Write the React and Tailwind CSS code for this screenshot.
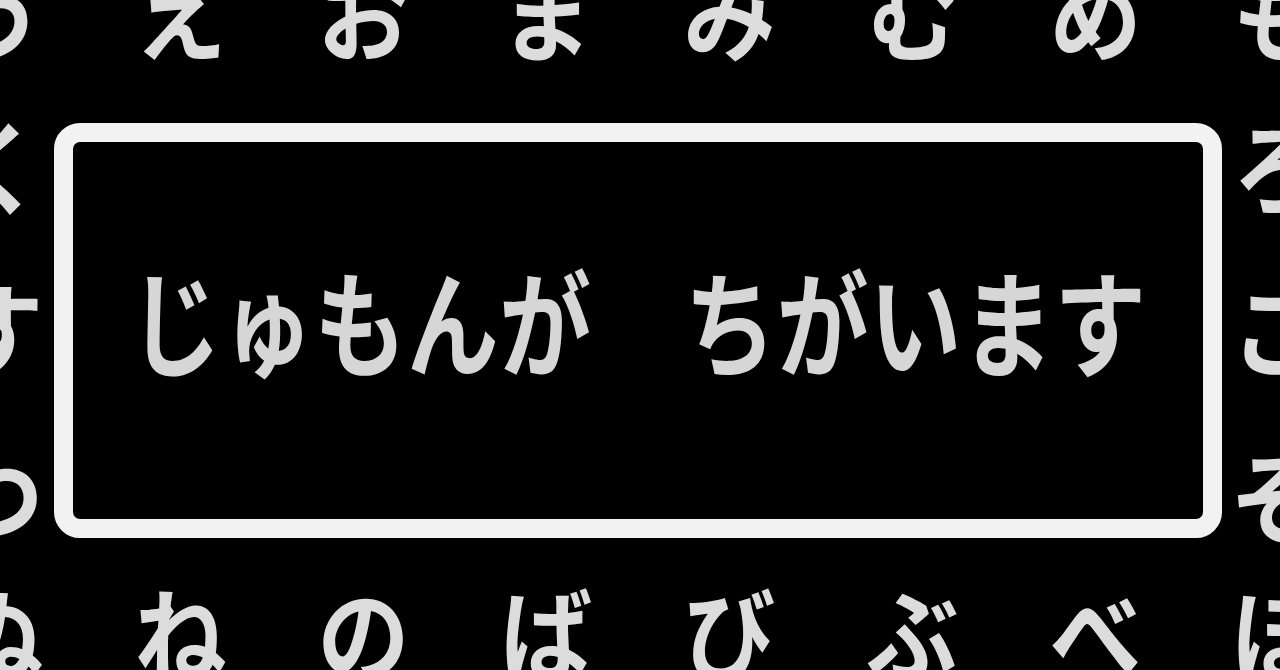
import React from 'react';

// Kana table behind the message window, one string per row
const TABLE = [
  { h: 'h-[160px]', kana: 'うえおまみむめも' },
  { h: 'h-[145px]', kana: 'くけこらりるれろ' },
  { h: 'h-[180px]', kana: 'すせそがぎぐげご' },
  { h: 'h-[155px]', kana: 'つてとざじずぜぞ' },
  { h: 'h-[120px]', kana: 'ぬねのばびぶべぼ' },
];

function KanaRow({ h, kana }) {
  return (
    <div className={`flex items-center ${h}`}>
      {[...kana].map((ch, i) => (
        <div key={i} className="flex w-[183px] shrink-0 justify-center">
          <span className="scale-y-110 text-[92px] font-bold leading-none text-[#dcdcdc]">{ch}</span>
        </div>
      ))}
    </div>
  );
}

export default function App() {
  return (
    <div className="relative h-[670px] w-[1280px] overflow-hidden bg-black font-['Noto_Sans_CJK_JP',sans-serif]">
      <div className="-ml-[94px] -mt-[70px] flex flex-col">
        {TABLE.map((row, i) => (
          <KanaRow key={i} {...row} />
        ))}
      </div>

      {/* message window over the table, with a black margin round it */}
      <div className="absolute left-[54px] top-[123px] flex h-[415px] w-[1168px] items-center justify-center rounded-[26px] border-[19px] border-[#f2f2f2] bg-black pb-[26px] ring-[12px] ring-black">
        <p className="scale-y-125 whitespace-pre text-[92px] font-bold leading-none tracking-[0.5px] text-[#d6d6d6]">
          じゅもんが　ちがいます
        </p>
      </div>
    </div>
  );
}
